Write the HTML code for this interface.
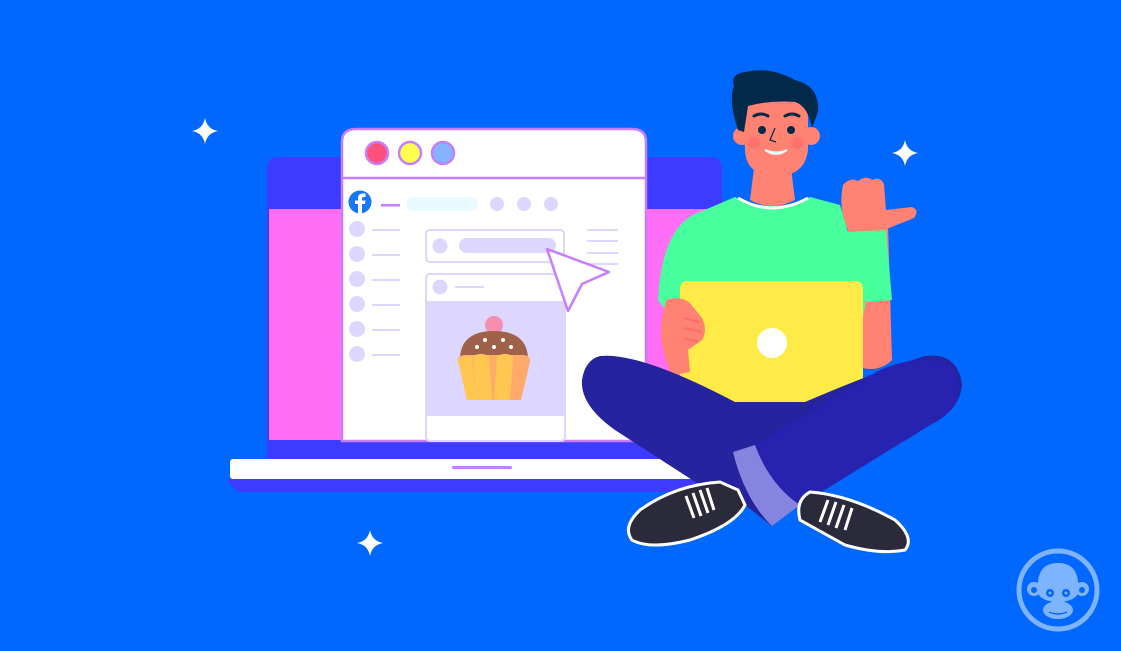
<!DOCTYPE html>
<html><head><meta charset="utf-8"><style>html,body{margin:0;padding:0;background:#0068ff;overflow:hidden}svg{display:block}</style></head>
<body>
<svg width="1121" height="651" viewBox="0 0 1121 651" xmlns="http://www.w3.org/2000/svg">
<rect width="1121" height="651" fill="#0068ff"/>
<defs><path id="sp" d="M0,-13 Q2,-2 13,0 Q2,2 0,13 Q-2,2 -13,0 Q-2,-2 0,-13Z" fill="#fff"/></defs>
<use href="#sp" x="205" y="131"/><use href="#sp" x="905" y="153"/><use href="#sp" x="370" y="543"/>
<!-- laptop back -->
<rect x="267" y="157" width="455" height="310" rx="10" fill="#3d3bff"/>
<rect x="269" y="209" width="450" height="231" fill="#ff6ef5"/>
<path d="M230,478 L700,478 L700,492 L238,492 L228,482Z" fill="#3d3bff"/>
<rect x="230" y="459" width="470" height="20" rx="3" fill="#fff"/>
<rect x="452" y="466" width="60" height="3" rx="1.5" fill="#c77dff"/>
<!-- browser -->
<path d="M342,441 L342,142 Q342,129 356,129 L632,129 Q646,129 646,142 L646,441Z" fill="#fff" stroke="#c77dff" stroke-width="2.5"/>
<line x1="342" y1="178" x2="646" y2="178" stroke="#c77dff" stroke-width="2.5"/>
<circle cx="377" cy="153" r="11" fill="#ff4f7b" stroke="#c77dff" stroke-width="2.5"/>
<circle cx="410" cy="153" r="11" fill="#ffff4f" stroke="#c77dff" stroke-width="2.5"/>
<circle cx="443" cy="153" r="11" fill="#84b4ff" stroke="#c77dff" stroke-width="2.5"/>
<circle cx="360" cy="202" r="11.5" fill="#1877f2"/>
<path d="M358,214 L358,204 L355,204 L355,200.5 L358,200.5 L358,198 Q358,193.5 363,193.5 L365.5,193.5 L365.5,197 L363.5,197 Q362,197 362,198.5 L362,200.5 L365.5,200.5 L365,204 L362,204 L362,214Z" fill="#fff"/>
<rect x="381" y="204" width="19" height="2.5" fill="#c77dff"/>
<rect x="406" y="197" width="72" height="14" rx="7" fill="#e8faff"/>
<g fill="#ddd6ff"><circle cx="497" cy="204" r="7"/><circle cx="524" cy="204" r="7"/><circle cx="551" cy="204" r="7"/>
<circle cx="357" cy="229" r="8"/><circle cx="357" cy="254" r="8"/><circle cx="357" cy="279" r="8"/><circle cx="357" cy="304" r="8"/><circle cx="357" cy="329" r="8"/><circle cx="357" cy="354" r="8"/>
<rect x="372" y="229" width="28" height="2"/><rect x="372" y="254" width="28" height="2"/><rect x="372" y="279" width="28" height="2"/><rect x="372" y="304" width="28" height="2"/><rect x="372" y="329" width="28" height="2"/><rect x="372" y="354" width="28" height="2"/>
<rect x="587" y="229" width="31" height="2"/><rect x="587" y="240" width="31" height="2"/><rect x="587" y="252" width="31" height="2"/><rect x="587" y="263" width="31" height="2"/></g>
<rect x="426" y="230" width="138" height="32" rx="4" fill="#fff" stroke="#ddd6ff" stroke-width="2"/>
<circle cx="440" cy="246" r="7.5" fill="#ddd6ff"/><rect x="459" y="238" width="97" height="15" rx="7.5" fill="#ddd6ff"/>
<rect x="426" y="274" width="139" height="167" rx="4" fill="#fff" stroke="#ddd6ff" stroke-width="2"/>
<circle cx="440" cy="287" r="7.5" fill="#ddd6ff"/><rect x="455" y="286" width="29" height="2" fill="#ddd6ff"/>
<rect x="426" y="301" width="139" height="115" fill="#ddd6ff"/>
<!-- cupcake -->
<circle cx="494" cy="325" r="9" fill="#f48fb1"/>
<path d="M460,357 Q462,331 494,331 Q526,331 528,357Z" fill="#a0614a"/>
<g fill="#fff"><circle cx="485" cy="340" r="2"/><circle cx="503" cy="340" r="2"/><circle cx="477" cy="347" r="2"/><circle cx="494" cy="347" r="2"/><circle cx="511" cy="347" r="2"/></g>
<path d="M458,360 Q458,355 466,355 L522,355 Q531,355 530,362 L521,400 L467,400Z" fill="#ffaa6b"/>
<path d="M473,356 Q481,352 489,356 L492,400 L476,400Z M497,356 Q505,352 513,356 L510,400 L494,400Z" fill="#ffc74f"/>
<path d="M458,360 Q462,354 472,357 L476,400 L467,400Z" fill="#ffc74f"/>
<!-- cursor -->
<path d="M547,249 L609,272 L582,284 L568,311Z" fill="#fff" stroke="#c77dff" stroke-width="2.5" stroke-linejoin="round"/>
<!-- raised arm -->
<path d="M848,225 L888,225 L892,360 Q880,372 862,368 L848,300Z" fill="#ff8272"/>
<path d="M843,185 Q850,177 858,181 Q866,175 872,180 Q880,176 884,184 L886,210 L912,207 Q920,210 914,218 L884,230 Q870,236 848,230 Q838,210 843,185Z" fill="#ff8272"/>
<!-- shirt -->
<path d="M735,197 Q770,215 810,197 L840,205 L848,232 L886,230 L892,300 L866,302 L860,330 L680,330 L658,300 Q662,225 700,212Z" fill="#48ff9e"/>
<path d="M738,198 Q772,218 808,198" stroke="#fff" stroke-width="3" fill="none"/>
<!-- neck & head -->
<path d="M755,160 L790,160 L795,200 Q772,212 750,200Z" fill="#ff8272"/>
<circle cx="742" cy="136" r="9" fill="#ff8272"/><circle cx="811" cy="136" r="9" fill="#ff8272"/>
<path d="M744,115 Q744,98 775,98 Q808,98 808,118 L808,150 Q805,176 776,176 Q746,176 745,150Z" fill="#ff8272"/>
<path d="M738,130 Q728,100 734,86 Q730,74 745,72 Q770,66 795,80 Q820,86 818,112 L812,128 Q808,106 795,102 Q770,100 748,106 L744,132Z" fill="#012a4a"/>
<circle cx="762" cy="130" r="4" fill="#012a4a"/><circle cx="791" cy="130" r="4" fill="#012a4a"/>
<path d="M754,116 Q761,112 768,116 M785,116 Q792,112 799,116" stroke="#012a4a" stroke-width="3" fill="none" stroke-linecap="round"/>
<path d="M775,128 L770,140 L776,142" stroke="#012a4a" stroke-width="1.2" fill="none"/>
<circle cx="754" cy="143" r="6" fill="#ff6a6a" opacity=".7"/><circle cx="797" cy="143" r="6" fill="#ff6a6a" opacity=".7"/>
<path d="M765,150 Q776,158 787,150 Q778,155 765,150Z" fill="#fff" stroke="#fff" stroke-width="2"/>
<!-- laptop -->
<path d="M688,281 L855,281 Q863,281 863,290 L863,395 L815,402 L725,402 L680,395 L680,290 Q680,281 688,281Z" fill="#ffeb47"/>
<circle cx="772" cy="343" r="15" fill="#fff"/>
<!-- left hand -->
<path d="M666,300 Q680,295 690,303 L702,318 Q708,330 702,340 L688,350 L690,372 L672,375 Q658,345 662,320Z" fill="#ff8272"/>
<path d="M684,318 L700,322 M684,328 L702,332 M684,338 L698,342" stroke="#ff6a6a" stroke-width="2" fill="none"/>
<!-- legs -->
<path d="M600,356 Q640,352 735,402 L805,402 Q880,370 925,356 Q958,352 962,385 Q960,410 930,425 L800,505 L772,526 L745,505 L700,485 L615,430 Q580,405 582,380 Q585,360 600,356Z" fill="#26239e"/>
<path d="M733,452 L755,445 Q770,485 800,505 L772,526 Q745,500 733,452Z" fill="#8585e0"/>
<path d="M755,445 L880,370 Q925,352 950,365 Q965,385 955,405 Q945,418 930,425 L800,505 Q770,485 755,445Z" fill="#2723b0"/>
<!-- shoes -->
<path d="M640,510 Q675,485 720,482 L738,490 L745,505 Q735,525 690,540 Q650,550 632,540 Q622,527 640,510Z" fill="#2a2a3a" stroke="#fff" stroke-width="3"/>
<path d="M686,496 L694,518 M693,493 L701,516 M700,490 L708,513 M707,488 L714,510" stroke="#fff" stroke-width="3" fill="none"/>
<path d="M810,492 Q850,495 895,520 Q915,538 905,550 Q880,555 845,545 L800,520 Q795,500 810,492Z" fill="#2a2a3a" stroke="#fff" stroke-width="3"/>
<path d="M828,500 L820,522 M836,502 L828,525 M844,505 L836,528 M852,508 L845,530" stroke="#fff" stroke-width="3" fill="none"/>
<!-- logo -->
<circle cx="1058" cy="590" r="39" fill="none" stroke="#7eb3ff" stroke-width="5"/>
<g fill="#7eb3ff">
<path d="M1038,590 Q1036,563 1058,563 Q1080,563 1078,590Z"/>
<circle cx="1034" cy="589" r="7"/><circle cx="1082" cy="589" r="7"/>
<ellipse cx="1058" cy="592" rx="20" ry="10"/>
<ellipse cx="1058" cy="610" rx="15" ry="9"/></g>
<g fill="#0068ff"><circle cx="1050" cy="593" r="4"/><circle cx="1066" cy="593" r="4"/><circle cx="1034" cy="590" r="3"/><circle cx="1082" cy="590" r="3"/></g>
<g fill="#7eb3ff"><circle cx="1050" cy="593" r="1.5"/><circle cx="1066" cy="593" r="1.5"/></g>
<path d="M1049,612 Q1058,616 1067,612" stroke="#0068ff" stroke-width="1.5" fill="none"/>
</svg>
</body></html>
